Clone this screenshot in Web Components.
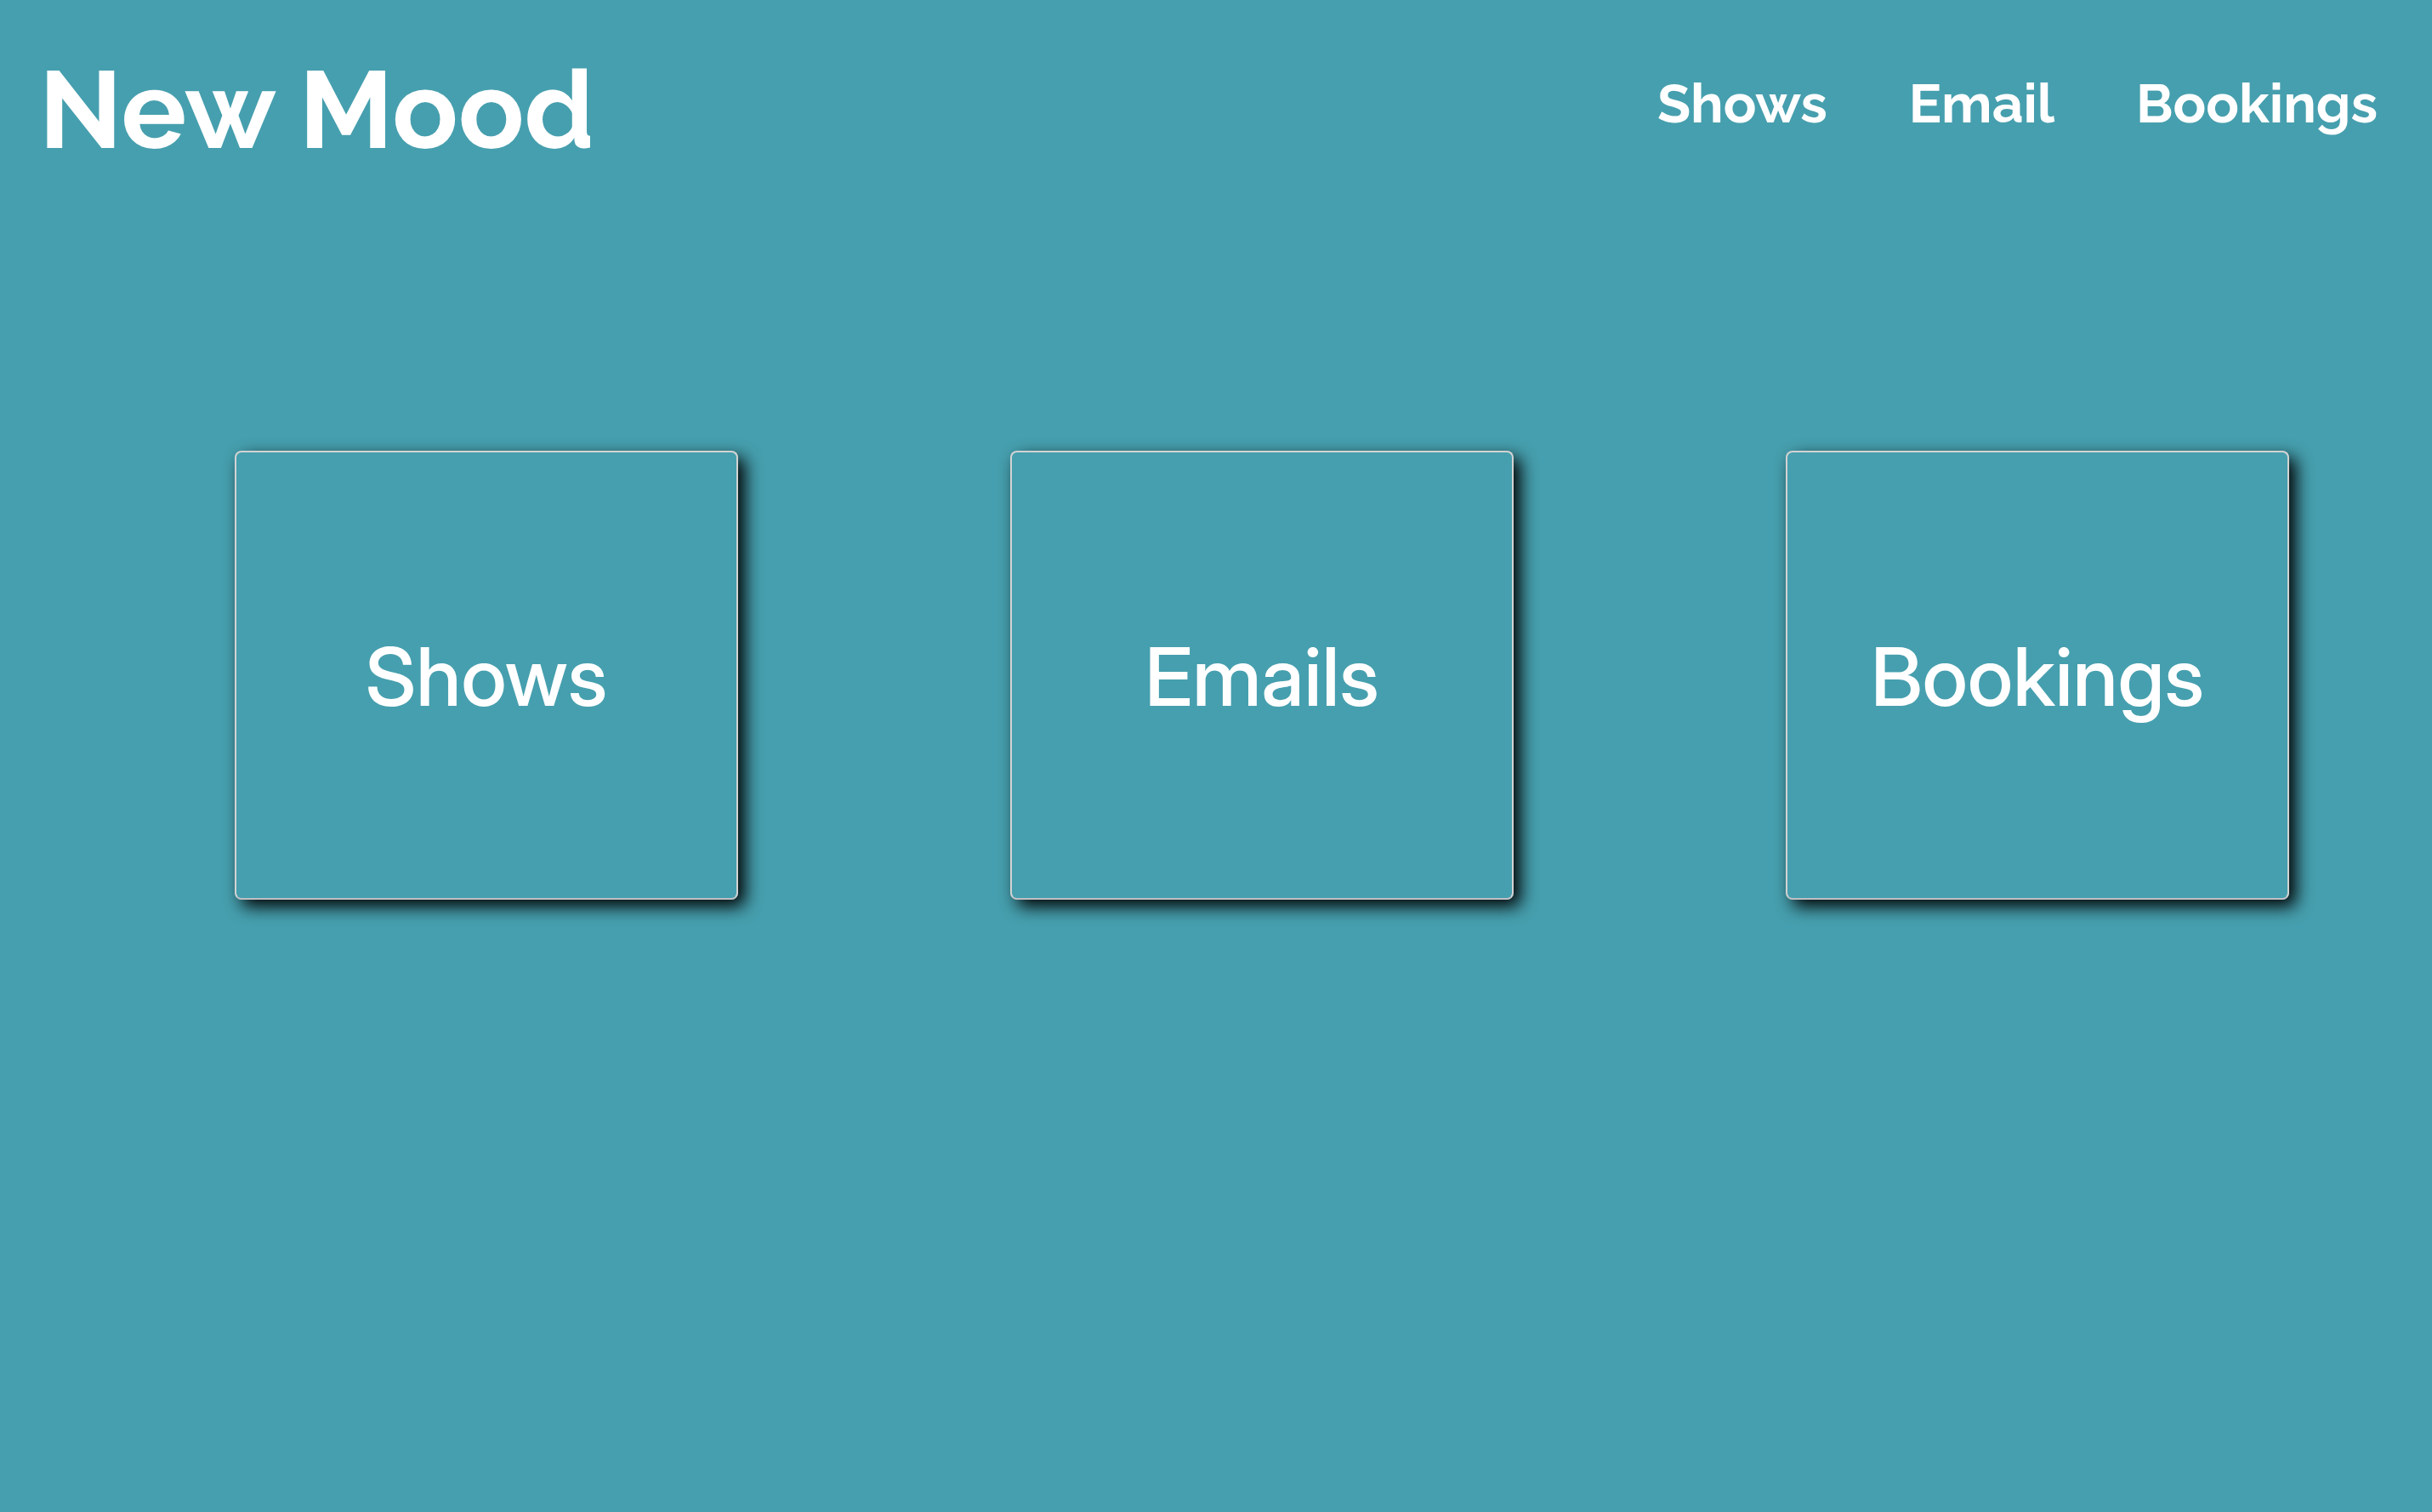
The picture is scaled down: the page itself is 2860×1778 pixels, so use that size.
<!DOCTYPE html>
<html lang="en">
<head>
<meta charset="utf-8">
<title>New Mood</title>
<meta name="viewport" content="width=device-width, initial-scale=1">
<style>
body { margin: 0; min-height: 100vh; background: #469fae; color: #fff; font-family: "Inter Display", Inter, "Liberation Sans", sans-serif; }
</style>
</head>
<body>
<mood-app></mood-app>
<script>
class MoodHeader extends HTMLElement {
  constructor() {
    super();
    this.attachShadow({ mode: "open" }).innerHTML = `
      <style>
        :host { display: flex; justify-content: space-between; align-items: flex-start; padding: 50px 64px 0 46px; font-family: Raleway, Lato, sans-serif; font-weight: 700; }
        h1 { margin: 0; font-size: 128px; line-height: 158px; font-weight: inherit; }
        nav { display: flex; gap: 96px; padding-top: 32px; }
      </style>
      <h1><slot name="brand"></slot></h1>
      <nav aria-label="Main"><slot></slot></nav>`;
  }
}
class MoodLink extends HTMLElement {
  constructor() {
    super();
    this.attachShadow({ mode: "open" }).innerHTML = `
      <style>
        :host { display: block; }
        a { color: inherit; text-decoration: none; font-size: 64px; line-height: 80px; }
      </style>
      <a><slot></slot></a>`;
    this.shadowRoot.querySelector("a").href = this.getAttribute("href") || "#";
  }
}
class MoodCard extends HTMLElement {
  constructor() {
    super();
    this.attachShadow({ mode: "open" }).innerHTML = `
      <style>
        :host { display: block; }
        a { display: flex; align-items: center; justify-content: center; height: 528px; padding-top: 4px; box-sizing: border-box; border: 2px solid #d3d3d3; border-bottom-color: #c0c0c4; border-radius: 8px; box-shadow: 8px 8px 20px #000; color: inherit; text-decoration: none; }
        h2 { margin: 0; font-size: 95px; line-height: 112px; font-weight: 500; }
      </style>
      <a><h2><slot></slot></h2></a>`;
    this.shadowRoot.querySelector("a").href = this.getAttribute("href") || "#";
  }
}
class MoodApp extends HTMLElement {
  constructor() {
    super();
    this.attachShadow({ mode: "open" }).innerHTML = `
      <style>
        :host { display: block; }
        main { display: grid; grid-template-columns: repeat(3, 1fr); gap: 320px; padding: 322px 168px 64px 276px; }
      </style>
      <mood-header>
        <span slot="brand">New Mood</span>
        <mood-link href="#shows">Shows</mood-link>
        <mood-link href="#email">Email</mood-link>
        <mood-link href="#bookings">Bookings</mood-link>
      </mood-header>
      <main>
        <mood-card href="#shows">Shows</mood-card>
        <mood-card href="#email">Emails</mood-card>
        <mood-card href="#bookings">Bookings</mood-card>
      </main>`;
  }
}
customElements.define("mood-header", MoodHeader);
customElements.define("mood-link", MoodLink);
customElements.define("mood-card", MoodCard);
customElements.define("mood-app", MoodApp);
</script>
</body>
</html>
